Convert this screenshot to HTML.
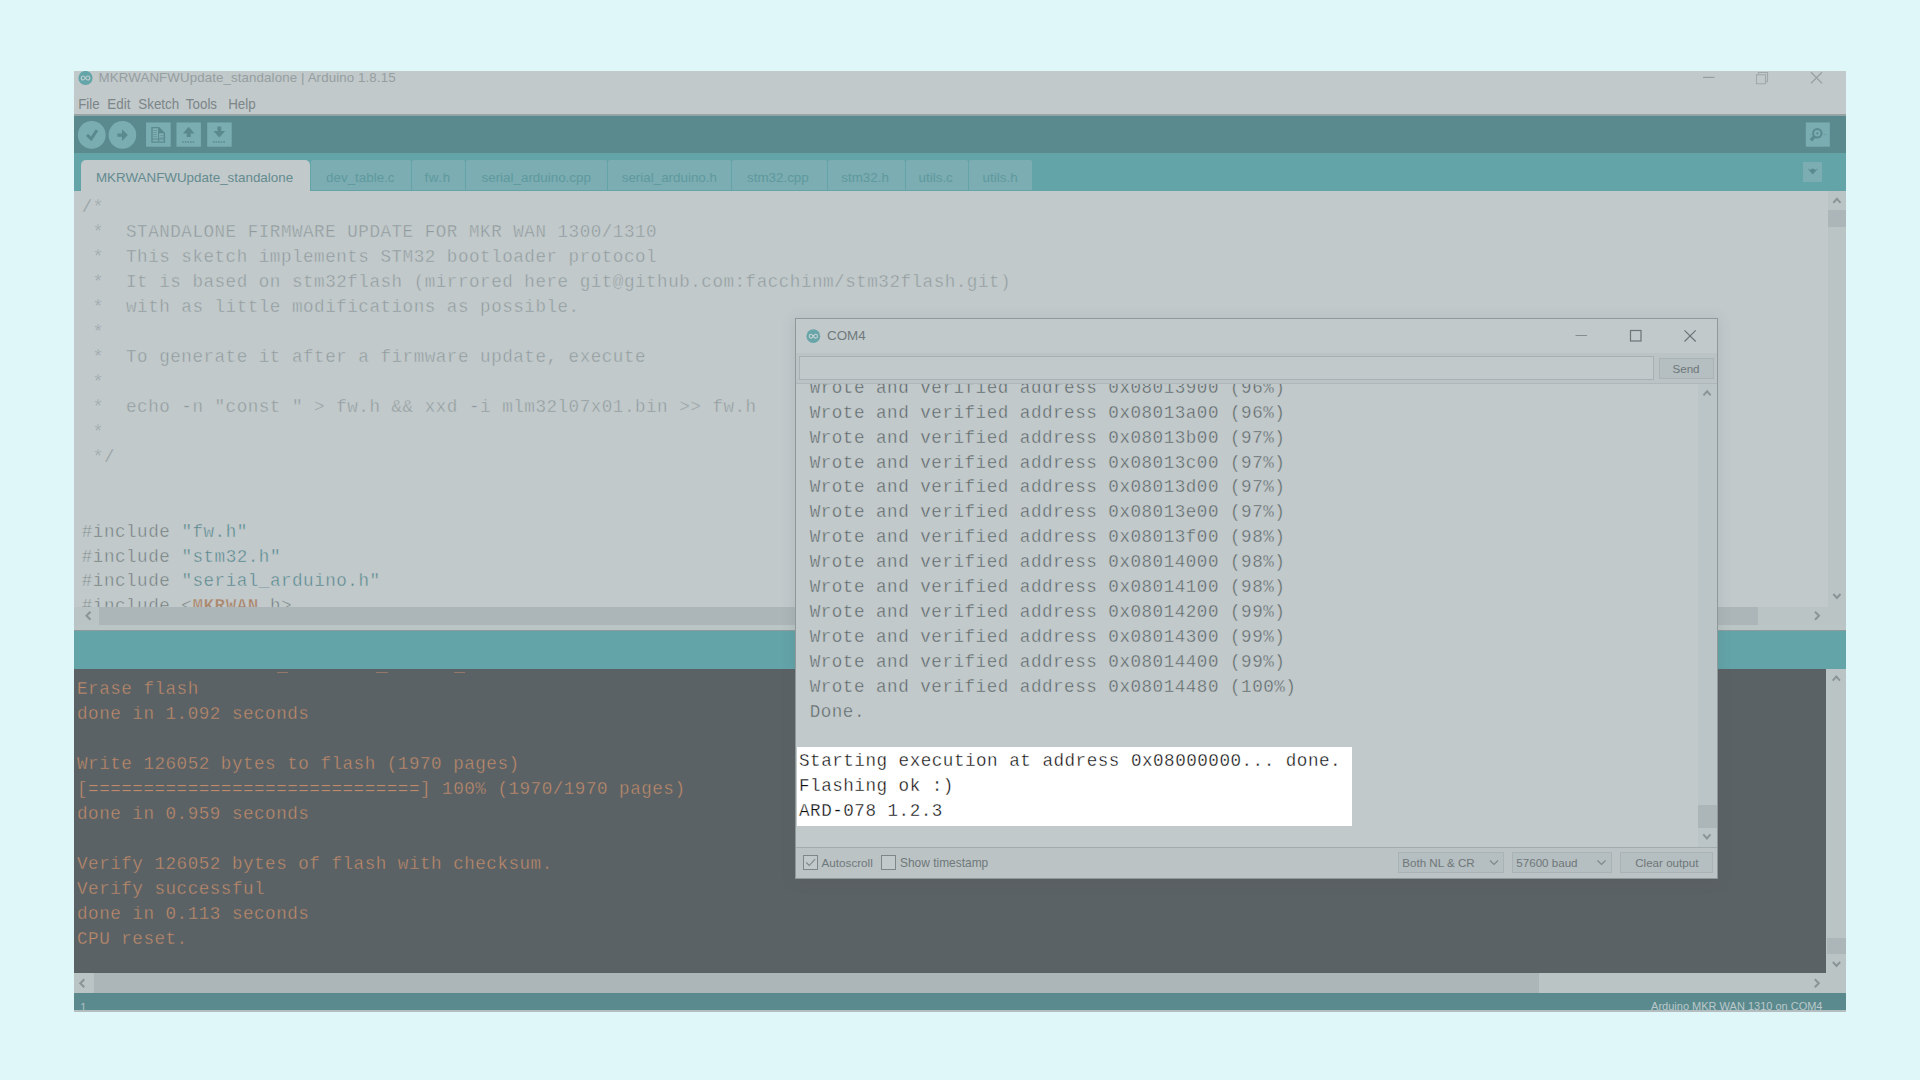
<!DOCTYPE html>
<html>
<head>
<meta charset="utf-8">
<title>Arduino IDE</title>
<style>
html,body{margin:0;padding:0;}
body{width:1920px;height:1080px;overflow:hidden;background:#DFF7F9;position:relative;font-family:"Liberation Sans",sans-serif;}
.abs{position:absolute;}
#win{position:absolute;left:74px;top:71px;width:1772px;height:941px;background:#C1C9CB;overflow:hidden;}
.ui{font-family:"Liberation Sans",sans-serif;white-space:pre;position:absolute;}
.mono{font-family:"Liberation Mono",monospace;font-size:17.6px;letter-spacing:0.505px;line-height:24.93px;white-space:pre;position:absolute;-webkit-text-stroke:0.45px #C1C9CB;paint-order:fill stroke;}
/* all coordinates inside #win are relative to (74,71) */
#title{left:24.6px;top:-0.8px;font-size:13.3px;line-height:16px;color:#959EA0;letter-spacing:0.11px;}
.mn{top:24.6px;font-size:13.4px;line-height:17px;color:#7C8587;transform:scaleY(1.04);transform-origin:0 13px;}
#menusep{left:0;top:43px;width:1772px;height:1px;background:#9CA3A3;border-bottom:1px solid #8FA4A6;}
#toolbar{left:0;top:45px;width:1772px;height:37px;background:#5A8A8E;}
#tabbar{left:0;top:82px;width:1772px;height:38px;background:#63A4A8;}
.tab{position:absolute;top:89px;height:30px;background:#7BADB2;border-radius:2px 2px 0 0;color:#5F999E;font-size:13.4px;white-space:pre;}
.tab span{position:absolute;top:9.5px;line-height:16px;}
.tab.act{background:#C1C9CB;color:#648B8F;height:31px;border-radius:5px 5px 0 0;}
#editor{left:0;top:120px;width:1754px;height:416px;overflow:hidden;}
.c{color:#8F999B;}
.pp{color:#727D7B;}
.st{color:#53848A;}
.kw{color:#AB8569;font-weight:bold;}
.sbtrack{position:absolute;background:#BAC4C5;}
.sbthumb{position:absolute;background:#ACB6B8;}
#console{left:0;top:597.6px;width:1752.3px;height:304.4px;background:#5B6265;overflow:hidden;}
#console .mono{color:#BF8B6C;-webkit-text-stroke:0.35px #5B6265;}
#com{position:absolute;left:795px;top:318px;width:923px;height:561px;box-sizing:border-box;border:1px solid #8F999A;background:#BBC3C5;box-shadow:0 2px 12px 2px rgba(70,85,88,0.11);overflow:hidden;}
#com .mono{color:#5C6567;-webkit-text-stroke-width:0.4px;}
.btn{position:absolute;box-sizing:border-box;border:1px solid #A9B2B4;background:#B5BEC0;color:#6E777A;font-size:11.6px;text-align:center;white-space:pre;}
</style>
</head>
<body>

<div id="win">
  <!-- title bar -->
  <svg class="abs" style="left:3.5px;top:0px" width="16" height="16" viewBox="0 0 16 16">
    <circle cx="7.5" cy="7" r="7.100" fill="#64A5A9"/>
    <path d="M3.2 7c0-1.300 1-2 2-2 1.600 0 2.600 4 4.600 4 1 0 2-.7 2-2s-1-2-2-2c-2 0-3 4-4.600 4-1 0-2-.7-2-2z" fill="none" stroke="#BCCCCD" stroke-width="1.100"/>
  </svg>
  <div id="title" class="ui">MKRWANFWUpdate_standalone | Arduino 1.8.15</div>
  <!-- window controls -->
  <svg class="abs" style="left:1625px;top:0px" width="130" height="16" viewBox="0 0 130 16">
    <path d="M4 6.400h11.500" stroke="#969EA0" stroke-width="1.200" fill="none"/>
    <path d="M57.5 3.700h9v9h-9z M59.5 3.700v-2.200h9v9.200h-2" stroke="#A0A8AA" stroke-width="1.100" fill="none"/>
    <path d="M112 1.300l11 11M123 1.300l-11 11" stroke="#99A1A3" stroke-width="1.300" fill="none"/>
  </svg>
  <div class="ui mn" style="left:4.2px;">File</div><div class="ui mn" style="left:33.3px;">Edit</div><div class="ui mn" style="left:64.3px;">Sketch</div><div class="ui mn" style="left:111.8px;">Tools</div><div class="ui mn" style="left:154.2px;">Help</div>
  <div id="menusep" class="abs"></div>

  <!-- toolbar -->
  <div id="toolbar" class="abs"></div>
  <svg class="abs" style="left:0;top:45px" width="1772" height="37" viewBox="0 0 1772 37">
    <g fill="#7AADB1">
      <circle cx="17.750" cy="18.900" r="13.900"/>
      <circle cx="48.400" cy="18.900" r="13.800"/>
      <rect x="72.100" y="6.500" width="24.600" height="24.200"/>
      <rect x="102.500" y="6.500" width="24.400" height="24.200"/>
      <rect x="133.200" y="6.500" width="24.500" height="24.200"/>
      <rect x="1731.8" y="6.5" width="24" height="24.2"/>
    </g>
    <g fill="none" stroke="#5A8A8E">
      <path d="M13 18.900l4.200 4 5.800-8.700" stroke-width="3"/>
      <path d="M43.300 19.100h5" stroke-width="3.300"/>
    </g>
    <g fill="#5A8A8E">
      <path d="M48 13.300l5.900 5.800-5.900 5.900z"/>
      <!-- new doc -->
      <path d="M78 11.600h6.800l5.600 5.600v8.900h-12.400z" fill="#7FADB1" stroke="#5A8A8E" stroke-width="1.400"/>
      <path d="M84.600 11.400l5.900 5.900h-5.900z" fill="#5A8A8E"/>
      <path d="M84.600 12v13.500M78.500 23h11.500" fill="none" stroke="#5A8A8E" stroke-width="1.100"/>
      <path d="M79.500 14.500h4M79.500 16.500h4M79.500 18.500h4M79.500 20.500h4M86.500 19.500h3M86.500 21.500h3" stroke="#5A8A8E" stroke-width="1" fill="none" stroke-dasharray="1 1"/>
      <!-- open: up arrow -->
      <path d="M114.700 10.800l5.900 6.600h-3.900v3.500h-4v-3.500h-3.900z"/>
      <path d="M108.200 26h13" stroke="#5A8A8E" stroke-width="1.400" stroke-dasharray="1.600 1" fill="none"/>
      <!-- save: down arrow -->
      <path d="M145.300 21.500l5.900-6.400h-4v-4.700h-3.800v4.700h-4z"/>
      <path d="M138.900 26h13" stroke="#5A8A8E" stroke-width="1.400" stroke-dasharray="1.600 1" fill="none"/>
    </g>
    <!-- serial monitor -->
    <g fill="none" stroke="#5A8A8E">
      <circle cx="1743.300" cy="17.300" r="4.200" stroke-width="2"/>
      <path d="M1740.300 20.600l-3.400 3.800" stroke-width="3.400"/>
      <path d="M1735.5 18.5h2M1749.5 18.5h3" stroke-width="0.8" stroke="#6B9A9E"/>
    </g>
    <circle cx="1743.300" cy="17.300" r="1.100" fill="#5A8A8E"/>
  </svg>

  <!-- tab bar -->
  <div id="tabbar" class="abs"></div>
  <div class="tab act" style="left:7.2px;width:229.2px;"><span style="left:14.7px">MKRWANFWUpdate_standalone</span></div>
  <div class="tab" style="left:237.2px;width:100.0px;"><span style="left:14.9px">dev_table.c</span></div>
  <div class="tab" style="left:338.2px;width:53.3px;"><span style="left:12.3px;letter-spacing:0.6px">fw.h</span></div>
  <div class="tab" style="left:392.4px;width:140.8px;"><span style="left:15.1px">serial_arduino.cpp</span></div>
  <div class="tab" style="left:534.3px;width:122.9px;"><span style="left:13.4px">serial_arduino.h</span></div>
  <div class="tab" style="left:658.4px;width:94.5px;"><span style="left:14.6px">stm32.cpp</span></div>
  <div class="tab" style="left:754.0px;width:77.1px;"><span style="left:13.3px">stm32.h</span></div>
  <div class="tab" style="left:832.4px;width:61.6px;"><span style="left:12.2px">utils.c</span></div>
  <div class="tab" style="left:895.3px;width:62.6px;"><span style="left:13.3px">utils.h</span></div>
  <div class="abs" style="left:1728.5px;top:91px;width:19.5px;height:19.5px;background:#7BADB2;"></div>
  <svg class="abs" style="left:1728.5px;top:91px" width="20" height="20" viewBox="0 0 20 20"><path d="M4.5 6.5l5.2 6 5.2-6-2.6 1.3-2.6-1.3-2.6 1.3z" fill="#5A8A8E"/></svg>

  <!-- editor -->
  <div id="editor" class="abs">
<div class="mono" style="left:7.8px;top:4.4px;"><span class="c">/*
 *  STANDALONE FIRMWARE UPDATE FOR MKR WAN 1300/1310
 *  This sketch implements STM32 bootloader protocol
 *  It is based on stm32flash (mirrored here git@github.com:facchinm/stm32flash.git)
 *  with as little modifications as possible.
 *
 *  To generate it after a firmware update, execute
 *
 *  echo -n "const " &gt; fw.h &amp;&amp; xxd -i mlm32l07x01.bin &gt;&gt; fw.h
 *
 */</span>


<span class="pp">#include</span> <span class="st">"fw.h"</span>
<span class="pp">#include</span> <span class="st">"stm32.h"</span>
<span class="pp">#include</span> <span class="st">"serial_arduino.h"</span>
<span class="pp">#include &lt;</span><span class="kw">MKRWAN</span><span class="pp">.h&gt;</span></div>
  </div>
  <!-- editor vertical scrollbar -->
  <div class="sbtrack" style="left:1753.5px;top:120px;width:18.5px;height:416px;"></div>
  <div class="sbthumb" style="left:1753.5px;top:139px;width:18px;height:17px;"></div>
  <svg class="abs" style="left:1753.5px;top:120px" width="19" height="416" viewBox="0 0 19 416">
    <path d="M5.3 11.8l3.6-4 3.6 4" stroke="#8A9496" stroke-width="2" fill="none"/>
    <path d="M5.3 403l3.6 4 3.6-4" stroke="#8A9496" stroke-width="2" fill="none"/>
  </svg>
  <!-- editor horizontal scrollbar -->
  <div class="sbtrack" style="left:0;top:536px;width:1772px;height:18px;"></div>
  <div class="sbthumb" style="left:25px;top:536px;width:1659px;height:18px;"></div>
  <svg class="abs" style="left:0;top:536px" width="1772" height="18" viewBox="0 0 1772 18">
    <path d="M16.5 4.800l-4 4 4 4" stroke="#8A9496" stroke-width="2" fill="none"/>
    <path d="M1741 4.800l4 4-4 4" stroke="#8A9496" stroke-width="2" fill="none"/>
  </svg>
  <div class="abs" style="left:0;top:554px;width:1772px;height:5px;background:#BBC5C6;"></div>
  <!-- status band -->
  <div class="abs" style="left:0;top:559px;width:1772px;height:38.5px;background:#63A4A8;border-top:1px solid #8C9C9D;box-sizing:border-box;"></div>

  <!-- console -->
  <div id="console" class="abs">
    <div class="abs" style="left:202.5px;top:3.6px;width:11.5px;height:1.3px;background:#917869;"></div>
    <div class="abs" style="left:302px;top:3.6px;width:11.5px;height:1.3px;background:#917869;"></div>
    <div class="abs" style="left:379.5px;top:3.6px;width:11.5px;height:1.3px;background:#917869;"></div>
<div class="mono" style="left:3px;top:8.6px;">Erase flash
done in 1.092 seconds

Write 126052 bytes to flash (1970 pages)
[==============================] 100% (1970/1970 pages)
done in 0.959 seconds

Verify 126052 bytes of flash with checksum.
Verify successful
done in 0.113 seconds
CPU reset.</div>
  </div>
  <!-- console v scrollbar -->
  <div class="sbtrack" style="left:1752.3px;top:597.6px;width:19.7px;height:304.4px;"></div>
  <div class="sbthumb" style="left:1752.5px;top:867px;width:19px;height:16px;"></div>
  <svg class="abs" style="left:1752px;top:597px" width="20" height="305" viewBox="0 0 20 305">
    <path d="M6.700 12.600l3.600-4 3.600 4" stroke="#8A9496" stroke-width="2" fill="none"/>
    <path d="M6.900 294l3.600 4 3.600-4" stroke="#8A9496" stroke-width="2" fill="none"/>
  </svg>
  <!-- console h scrollbar -->
  <div class="sbtrack" style="left:0;top:902px;width:1772px;height:19.5px;"></div>
  <div class="sbthumb" style="left:20px;top:902px;width:1445.4px;height:19.5px;"></div>
  <svg class="abs" style="left:0;top:902px" width="1772" height="20" viewBox="0 0 1772 20">
    <path d="M10.300 6.200l-4 4 4 4" stroke="#8A9496" stroke-width="2" fill="none"/>
    <path d="M1740.800 6.200l4 4-4 4" stroke="#8A9496" stroke-width="2" fill="none"/>
  </svg>
  <!-- bottom status -->
  <div class="abs" style="left:0;top:921.5px;width:1772px;height:17.5px;background:#5A8A8E;overflow:hidden;">
    <div class="ui" style="left:6.3px;top:7.3px;font-size:11px;line-height:14px;color:#B0C0C2;">1</div>
    <div class="ui" style="right:23.5px;top:6.2px;font-size:11px;line-height:14px;color:#BCC8CA;">Arduino MKR WAN 1310 on COM4</div>
  </div>
  <div class="abs" style="left:0;top:939px;width:1772px;height:2px;background:#B4BEC0;"></div>
</div>

<!-- COM4 serial monitor window -->
<div id="com">
  <div class="abs" style="left:0;top:0;width:921px;height:34px;background:#C1C9CB;"></div>
  <svg class="abs" style="left:10px;top:9.5px" width="16" height="16" viewBox="0 0 16 16">
    <circle cx="7.3" cy="7.2" r="6.9" fill="#68A5A9"/>
    <path d="M3.2 7.2c0-1.3 1-1.9 1.9-1.9 1.6 0 2.6 3.8 4.5 3.8 1 0 1.9-.6 1.9-1.9s-.9-1.9-1.9-1.9c-1.9 0-2.9 3.8-4.5 3.8-.9 0-1.900-.6-1.900-1.9z" fill="none" stroke="#C6D2D3" stroke-width="1.1"/>
  </svg>
  <div class="ui" style="left:31px;top:8px;font-size:13.4px;line-height:17px;color:#70797C;">COM4</div>
  <svg class="abs" style="left:775px;top:5px" width="140" height="24" viewBox="0 0 140 24">
    <path d="M4.500 11.5h11.5" stroke="#848D8F" stroke-width="1" fill="none"/>
    <rect x="59.500" y="6.500" width="10.500" height="10.500" stroke="#6B7477" stroke-width="1.2" fill="none"/>
    <path d="M113.500 6.300l11.200 11.200M124.700 6.300l-11.200 11.200" stroke="#6B7477" stroke-width="1.200" fill="none"/>
  </svg>
  <!-- input row -->
  <div class="abs" style="left:2.500px;top:37.400px;width:855px;height:23.400px;box-sizing:border-box;border:1px solid #A7B0B2;background:#C1C9CB;"></div>
  <div class="btn" style="left:862.500px;top:39px;width:55px;height:21px;line-height:19px;">Send</div>
  <!-- text area -->
  <div class="abs" style="left:0;top:64.3px;width:921px;height:463.7px;background:#C1C9CB;border-top:1px solid #AEB7B9;overflow:hidden;box-sizing:border-box;">
<div class="mono" style="left:2.6px;top:-8.6px;"> Wrote and verified address 0x08013900 (96%)
 Wrote and verified address 0x08013a00 (96%)
 Wrote and verified address 0x08013b00 (97%)
 Wrote and verified address 0x08013c00 (97%)
 Wrote and verified address 0x08013d00 (97%)
 Wrote and verified address 0x08013e00 (97%)
 Wrote and verified address 0x08013f00 (98%)
 Wrote and verified address 0x08014000 (98%)
 Wrote and verified address 0x08014100 (98%)
 Wrote and verified address 0x08014200 (99%)
 Wrote and verified address 0x08014300 (99%)
 Wrote and verified address 0x08014400 (99%)
 Wrote and verified address 0x08014480 (100%)
 Done.</div>
    <!-- scrollbar -->
    <div class="sbtrack" style="left:902px;top:0;width:19px;height:463px;background:#BBC4C6;"></div>
    <div class="sbthumb" style="left:902.3px;top:420.4px;width:18.6px;height:23px;"></div>
    <svg class="abs" style="left:902px;top:0" width="19" height="463" viewBox="0 0 19 463">
      <path d="M5.500 11.300l3.600-4 3.600 4" stroke="#8A9496" stroke-width="2" fill="none"/>
      <path d="M5.300 450.400l3.600 4 3.600-4" stroke="#8A9496" stroke-width="2" fill="none"/>
    </svg>
  </div>
  <!-- highlight (un-dimmed) -->
  <div class="abs" style="left:1px;top:428px;width:554.9px;height:79px;background:#FFFFFF;overflow:hidden;">
<div class="mono" style="left:2px;top:2.2px;color:#0c0c0c;-webkit-text-stroke:0.33px #FFFFFF;">Starting execution at address 0x08000000... done.
Flashing ok :)
ARD-078 1.2.3</div>
  </div>
  <!-- bottom panel -->
  <div class="abs" style="left:0;top:528px;width:921px;height:31px;background:#BBC3C5;border-top:1px solid #A2ABAD;box-sizing:border-box;"></div>
  <div class="abs" style="left:7px;top:536.1px;width:15px;height:15px;box-sizing:border-box;border:1px solid #7D8789;background:#C1C9CB;"></div>
  <svg class="abs" style="left:7px;top:536.1px" width="15" height="15" viewBox="0 0 15 15"><path d="M3.300 7.500l3 3 5.800-6.300" stroke="#7D8789" stroke-width="1.100" fill="none"/></svg>
  <div class="ui" style="left:25.500px;top:536.1px;font-size:11.700px;line-height:16px;color:#6F787A;">Autoscroll</div>
  <div class="abs" style="left:84.800px;top:536.1px;width:15px;height:15px;box-sizing:border-box;border:1px solid #7D8789;background:#C1C9CB;"></div>
  <div class="ui" style="left:104px;top:536.1px;font-size:11.950px;line-height:16px;color:#6F787A;">Show timestamp</div>
  <div class="btn" style="left:602.300px;top:533px;width:106.2px;height:21px;line-height:19px;text-align:left;padding-left:3px;">Both NL &amp; CR</div>
  <div class="btn" style="left:716.300px;top:533px;width:99.500px;height:21px;line-height:19px;text-align:left;padding-left:3px;">57600 baud</div>
  <div class="btn" style="left:824.300px;top:533.3px;width:93px;height:21px;line-height:19px;">Clear output</div>
  <svg class="abs" style="left:602px;top:533px" width="220" height="22" viewBox="0 0 220 22">
    <path d="M92 8.500l4 4 4-4" stroke="#7D8789" stroke-width="1.100" fill="none"/>
    <path d="M199.500 8.500l4 4 4-4" stroke="#7D8789" stroke-width="1.100" fill="none"/>
  </svg>
</div>

</body>
</html>
